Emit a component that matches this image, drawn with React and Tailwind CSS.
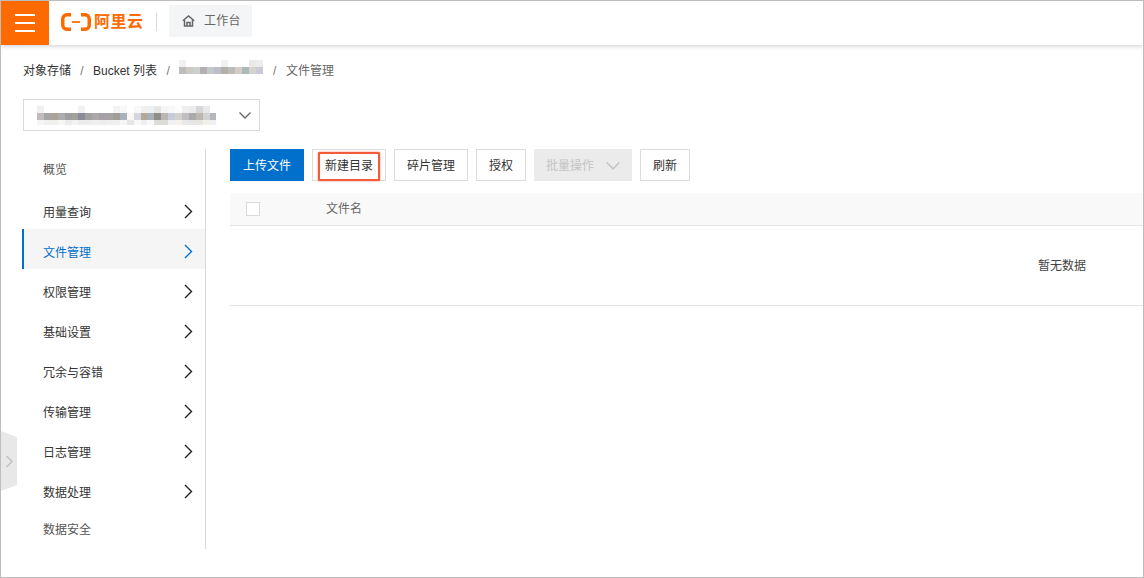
import React from 'react';

const menuItems = [
  { label: '概览', leaf: true },
  { label: '用量查询' },
  { label: '文件管理', active: true },
  { label: '权限管理' },
  { label: '基础设置' },
  { label: '冗余与容错' },
  { label: '传输管理' },
  { label: '日志管理' },
  { label: '数据处理' },
  { label: '数据安全', leaf: true },
];

// pixelated (redacted) text, rendered as colored blocks
const crumbMosaic = [
  ['#f1f1f1', '#fff', '#fff', '#fff', '#fff', '#fff', '#f1f1f1', '#fff', '#fff', '#fff', '#e9e9e8', '#ececec'],
  ['#bdbdbd', '#cdc8c2', '#c9d0cd', '#b5aeb2', '#c3c9ca', '#bcbec8', '#b3b0aa', '#bbbbb8', '#d3cdc6', '#adb8b8', '#d3d3cf', '#cbc9d8'],
];
const selectMosaic = [
  ['#f0f0f0', '#fff', '#fff', '#fff', '#fff', '#fff', '#f2f2f2', '#fff', '#fff', '#fff', '#fff', '#f3f3f3', '#f8f8f8', '#fff', '#f8f8f8', '#f2f0ec', '#eef1f4', '#e6e6e6', '#f5f5f5', '#f7f8f9', '#fdfcfa', '#eeeeee', '#ebebee', '#d6d6d6', '#e8e8ea', '#fff'],
  ['#c0bcbc', '#a5a5a7', '#a9a39a', '#adadad', '#9e9e9e', '#a1a19e', '#8a8c98', '#a2a0a0', '#aba7ab', '#a8a0a8', '#a8a2a6', '#a09c96', '#aab2bc', '#faf9f6', '#d4d6e2', '#b4a898', '#a8b0b8', '#8e9088', '#bab6b4', '#c8ccd6', '#d4d2d0', '#c0bec0', '#aaaaaa', '#bab8b0', '#d2d2d0', '#b4b8bc'],
  ['#f5f5f5', '#f0f0ee', '#f2f0ea', '#f6f6f4', '#ececec', '#f2f2f2', '#ececee', '#ececec', '#efefef', '#ededed', '#efefef', '#efefef', '#f5f5f6', '#e5e5e5', '#f8f8f8', '#f0eef0', '#f8f8fa', '#dcdcd8', '#dcdcd6', '#eef0f4', '#f4f0ec', '#e8e8ea', '#e6e6e6', '#e8e6e0', '#f2f0e8', '#eef0f6'],
];

function Mosaic({ rows, cell, heights, className = '' }) {
  const w = rows[0].length * cell;
  const h = heights.reduce((a, b) => a + b, 0);
  let y = 0;
  return (
    <svg width={w} height={h} shapeRendering="crispEdges" className={`block shrink-0 ${className}`}>
      {rows.map((row, r) => {
        const top = y;
        y += heights[r];
        return row.map((c, i) => (
          <rect key={`${r}-${i}`} x={i * cell} y={top} width={cell} height={heights[r]} fill={c} />
        ));
      })}
    </svg>
  );
}

function Chevron({ className }) {
  return (
    <svg width="9" height="15" viewBox="0 0 9 15" fill="none" className={className}>
      <path d="M1 1l6.5 6.500L1 14" stroke="currentColor" strokeWidth="1.4" />
    </svg>
  );
}

function ChevronDown({ className, width = 12, height = 7 }) {
  return (
    <svg width={width} height={height} viewBox="0 0 12 7" fill="none" className={className}>
      <path d="M.5.5L6 6l5.500-5.500" stroke="currentColor" strokeWidth="1.300" />
    </svg>
  );
}

function Button({ children, className = '' }) {
  return (
    <button className={`h-[32px] pt-[2px] border border-[#dcdcdc] bg-white text-[12px] text-[#333] flex items-center justify-center ${className}`}>
      {children}
    </button>
  );
}

export default function App() {
  return (
    <div className="relative w-[1144px] h-[578px] overflow-hidden bg-white border border-[#bdbdbd] font-['Liberation_Sans','Noto_Sans_CJK_SC',sans-serif] text-[12px] text-[#333]">
      <header className="relative h-[44px] flex items-center bg-white shadow-[0_1px_5px_rgba(0,0,0,0.2)]">
        <div className="w-[48px] h-[44px] bg-[#ff6a00] flex flex-col items-center justify-center gap-[6px]">
          <span className="block w-[20px] h-[2px] bg-white"></span>
          <span className="block w-[20px] h-[2px] bg-white"></span>
          <span className="block w-[20px] h-[2px] bg-white"></span>
        </div>
        <svg width="30" height="18" viewBox="0 0 30 18" className="ml-[12px] mb-[3px] shrink-0" fill="none">
          <path d="M10 1.750H6C3.500 1.750 1.750 3.500 1.750 6v6c0 2.500 1.750 4.250 4.250 4.250h4M20 1.750h4c2.500 0 4.250 1.750 4.250 4.250v6c0 2.500-1.750 4.250-4.250 4.250h-4" stroke="#ff6a00" strokeWidth="3.500" />
          <path d="M11 9h8" stroke="#ff6a00" strokeWidth="1.800" />
        </svg>
        <span className="ml-[3px] mb-[3px] w-[50px] shrink-0 whitespace-nowrap text-[16px] leading-none font-bold text-[#ff6a00] tracking-[0.5px]">阿里云</span>
        <span className="ml-[12px] mb-[3px] w-px h-[18px] bg-[#d9d9d9]"></span>
        <div className="ml-[12px] w-[83px] h-[32px] mb-[4px] rounded-[2px] bg-[#f4f5f6] flex items-center pl-[13px] text-[#666]">
          <svg width="13" height="12" viewBox="0 0 13 12" fill="none" stroke="#666" strokeWidth="1.500">
            <path d="M.8 5.800L6.500 1l5.700 4.800" />
            <path d="M2.500 5v6h8V5" />
            <path d="M5 11V7.500h3V11" />
          </svg>
          <span className="ml-[9px] text-[12px] tracking-[0.2px]">工作台</span>
        </div>
      </header>

      <nav className="mt-[17px] ml-[22px] h-[18px] flex items-center text-[12px] text-[#333]">
        <span>对象存储</span>
        <span className="w-[22px] text-center text-[#777]">/</span>
        <span>Bucket 列表</span>
        <span className="w-[22px] text-center text-[#777]">/</span>
        <Mosaic rows={crumbMosaic} cell={7} heights={[7, 7]} className="mb-[8px]" />
        <span className="w-[23px] text-center text-[#777]">/</span>
        <span className="text-[#666]">文件管理</span>
      </nav>

      <div className="mt-[19px] ml-[22px] w-[237px] h-[32px] border border-[#d9d9d9] flex items-center justify-between pl-[13px] pr-[8px]">
        <Mosaic rows={selectMosaic} cell={6.9} heights={[7, 7, 5]} />
        <ChevronDown className="text-[#666]" />
      </div>

      <div className="mt-[18px] ml-[21px] flex">
        <aside className="w-[184px] h-[400px] border-r border-[#d9d9d9]">
          {menuItems.map((item) => (
            <div
              key={item.label}
              className={`h-[40px] flex items-center justify-between pl-[19px] pr-[12px] ${
                item.active ? 'bg-[#f5f5f5] border-l-2 border-[#0070cc] text-[#0070cc]' : 'border-l-2 border-transparent'
              } ${item.leaf ? 'pt-[2px] text-[#555]' : 'pt-[8px]'}`}
            >
              <span>{item.label}</span>
              {!item.leaf && <Chevron className={`-mt-[4px] ${item.active ? 'text-[#0070cc]' : 'text-[#222]'}`} />}
            </div>
          ))}
        </aside>

        <main className="ml-[24px] flex-1">
          <div className="flex gap-[8px]">
            <button className="w-[74px] h-[32px] pt-[2px] bg-[#0070cc] text-white text-[12px]">上传文件</button>
            <div className="relative">
              <Button className="w-[74px]">新建目录</Button>
              <span className="absolute left-[6px] top-[3px] w-[62px] h-[29px] border-2 border-[#f25c3c] rounded-[1px] shadow-[0_0_2px_rgba(242,92,60,0.8)]"></span>
            </div>
            <Button className="w-[74px]">碎片管理</Button>
            <Button className="w-[50px]">授权</Button>
            <button className="w-[98px] h-[32px] pt-[2px] bg-[#ebebeb] text-[#c4c4c4] text-[12px] flex items-center justify-center gap-[12px]">
              批量操作
              <ChevronDown className="text-[#c4c4c4]" width={14} height={8} />
            </button>
            <Button className="w-[50px]">刷新</Button>
          </div>

          <div className="mt-[12px] h-[33px] bg-[#f9f9f9] border-b border-[#e5e5e5] flex items-center pl-[16px]">
            <span className="block w-[14px] h-[14px] bg-white border border-[#d9d9d9]"></span>
            <span className="ml-[66px] text-[#666]">文件名</span>
          </div>
          <div className="h-[80px] border-b border-[#e5e5e5] flex items-center justify-end pr-[57px] text-[#444]">
            暂无数据
          </div>
        </main>
      </div>

      {/* collapsed sidebar handle */}
      <div className="absolute left-0 top-[430px] w-[16px] h-[60px] bg-[#e8e8e8] [clip-path:polygon(0_0,100%_10%,100%_90%,0_100%)] flex items-center justify-center">
        <svg width="9" height="13" viewBox="0 0 9 13" fill="none">
          <path d="M1.500 1l5.500 5.500L1.500 12" stroke="#c4c4c4" strokeWidth="1.600" />
        </svg>
      </div>
    </div>
  );
}
